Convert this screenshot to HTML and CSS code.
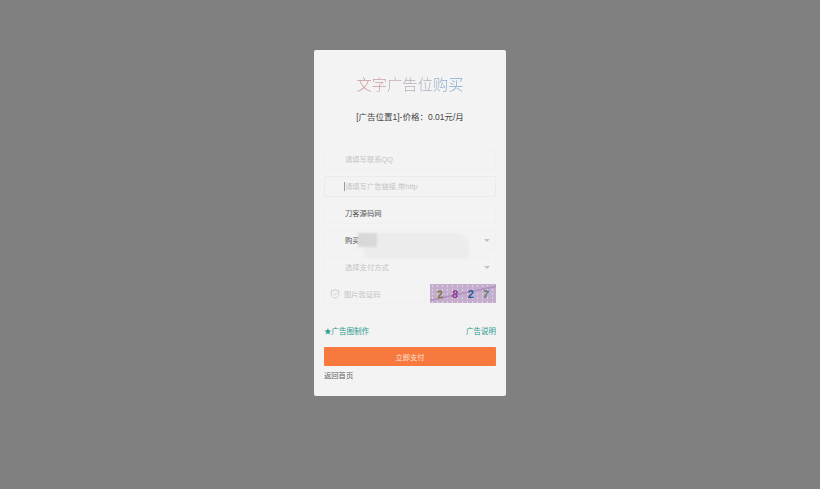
FILE: index.html
```html
<!DOCTYPE html>
<html lang="zh-CN">
<head>
<meta charset="utf-8">
<title>文字广告位购买</title>
<link rel="stylesheet" href="styles.css">
</head>
<body>
<main class="card">
  <h1 class="title">文字广告位购买</h1>
  <p class="price">[广告位置1]-价格：0.01元/月</p>
  <form class="form">
    <div class="field"><span class="ph">请填写联系QQ</span></div>
    <div class="field focus"><span class="caret"></span><span class="ph">请填写广告链接,带http</span></div>
    <div class="field"><span class="val">刀客源码网</span></div>
    <div class="field select"><span class="val">购买</span><span class="arrow"></span></div>
    <div class="field select"><span class="ph">选择支付方式</span><span class="arrow"></span></div>
    <div class="captcha-row">
      <div class="field code">
        <svg class="shield" viewBox="0 0 10 10" width="10" height="10"><path d="M5 .8 8.800 2v3c0 2.200-1.700 3.500-3.800 4.200C2.900 8.500 1.200 7.200 1.200 5V2z" fill="none" stroke="#c4c4c4" stroke-width=".8"/><path d="M3.400 5 4.600 6.200 6.800 3.900" fill="none" stroke="#c4c4c4" stroke-width=".8"/></svg>
        <span class="ph">图片验证码</span>
      </div>
      <div class="captcha">
        <span class="d1">2</span><span class="d2">8</span><span class="d3">2</span><span class="d4">7</span>
      </div>
    </div>
    <div class="links"><a class="link">★广告图制作</a><a class="link">广告说明</a></div>
    <button class="pay" type="button">立即支付</button>
    <a class="back">返回首页</a>
  </form>
  <div class="smear"><span class="s2"></span><span class="s1"></span></div>
</main>
</body>
</html>
```
FILE: styles.css
```css
* { box-sizing: border-box; }
html, body { height: 100%; }
body {
  margin: 0;
  background: #808080;
  font-family: "Liberation Sans", "Noto Sans CJK SC", sans-serif;
  display: flex;
  justify-content: center;
  align-items: flex-start;
  padding-top: 50px;
}
.card {
  position: relative;
  width: 192px;
  height: 346px;
  background: #f3f3f3;
  border-radius: 2px;
  padding: 26px 10px 0;
}
.title {
  margin: 0;
  height: 18px;
  font-size: 15.300px;
  line-height: 18px;
  font-weight: 300;
  text-align: center;
  color: transparent;
  background: linear-gradient(90deg, #c98f94 24%, #c4aab0 40%, #a0aec0 62%, #74a8d0 78%);
  -webkit-background-clip: text;
  background-clip: text;
}
.price {
  margin: 17px 0 0;
  height: 12px;
  line-height: 12px;
  font-size: 8.500px;
  text-align: center;
  color: #444;
}
.form { display: flex; flex-direction: column; margin-top: 26px; }
.field {
  position: relative;
  display: flex;
  align-items: center;
  height: 21px;
  margin-bottom: 6px;
  padding: 0 0 1px 20px;
  border: 1px solid #f0f0f0;
  border-radius: 2px;
  font-size: 7.300px;
}
.field.focus { border-color: #ebebeb; padding-left: 19px; }
.ph { color: #c4c4c4; }
.val { color: #555; }
.caret { width: 1px; height: 9px; background: #999; }
.arrow {
  position: absolute;
  right: 5px;
  top: 8px;
  border-style: solid;
  border-width: 3px 3.500px 0;
  border-color: #c2c2c2 transparent transparent;
}
.captcha-row { display: flex; justify-content: space-between; }
.code { width: 101px; height: 20px; padding-left: 5px; gap: 4px; margin-bottom: 0; }
.shield { flex: none; }
.captcha {
  width: 66px;
  height: 19px;
  background:
    linear-gradient(168deg, transparent 46%, #b496c2 47%, #b496c2 52%, transparent 53%),
    radial-gradient(circle, #dcd0e2 0.6px, transparent 1px) 0 0 / 5px 4px,
    #c5aecd;
  display: flex;
  justify-content: space-around;
  align-items: center;
  padding: 0 2px;
  font-size: 11px;
  font-weight: 700;
  font-family: "Liberation Sans", sans-serif;
}
.d1 { color: #7d7440; transform: rotate(-8deg); }
.d2 { color: #8a3a90; transform: rotate(8deg); }
.d3 { color: #1f5c9a; }
.d4 { color: #4f7d6a; transform: rotate(6deg); }
.links {
  display: flex;
  justify-content: space-between;
  margin-top: 22px;
  height: 12px;
  line-height: 12px;
  font-size: 7.500px;
  color: #2a9a8c;
}
.pay {
  margin-top: 9px;
  height: 19px;
  border: 0;
  border-radius: 1px;
  background: #f7793e;
  color: #fbe3d6;
  font: 7.300px "Liberation Sans", "Noto Sans CJK SC", sans-serif;
}
.back { margin-top: 4px; font-size: 7.300px; line-height: 12px; color: #666; }
.smear { position: absolute; left: 44px; top: 183px; width: 112px; height: 27px; pointer-events: none; filter: blur(1px); }
.s1 { position: absolute; left: 0; top: 0; width: 19px; height: 14px; background: #d8d8d8; }
.s2 { position: absolute; left: 6px; top: 0; width: 105px; height: 26px; border-radius: 0 12px 2px 8px; background: #ececec; }
```
